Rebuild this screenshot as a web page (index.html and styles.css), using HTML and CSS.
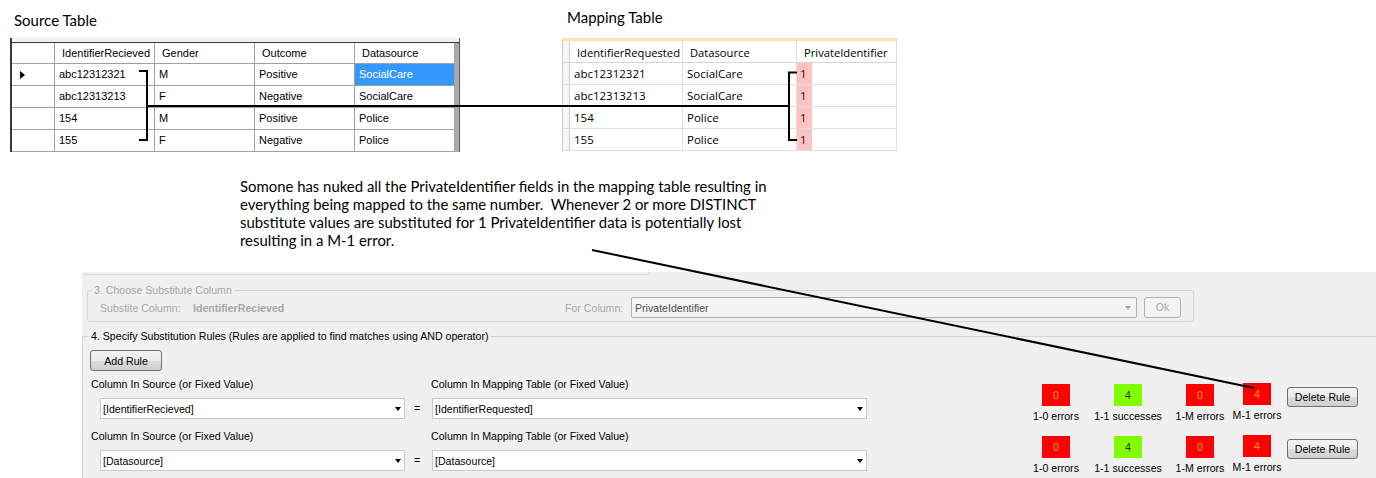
FILE: index.html
```html
<!DOCTYPE html>
<html>
<head>
<meta charset="utf-8">
<link rel="stylesheet" href="styles.css">
</head>
<body>
<div class="top">
  <section class="src">
    <h2 class="title src-title">Source Table</h2>
    <div class="sgrid">
      <div class="sband"></div>
      <div class="srow shead"><div class="rh"></div><div>IdentifierRecieved</div><div>Gender</div><div>Outcome</div><div>Datasource</div></div>
      <div class="srow"><div class="rh"><span class="cur"></span></div><div>abc12312321</div><div>M</div><div>Positive</div><div class="sel">SocialCare</div></div>
      <div class="srow"><div class="rh"></div><div>abc12313213</div><div>F</div><div>Negative</div><div>SocialCare</div></div>
      <div class="srow"><div class="rh"></div><div>154</div><div>M</div><div>Positive</div><div>Police</div></div>
      <div class="srow"><div class="rh"></div><div>155</div><div>F</div><div>Negative</div><div>Police</div></div>
      <div class="srow"><div class="rh"></div><div></div><div></div><div></div><div></div></div>
    </div>
  </section>
  <section class="map">
    <h2 class="title map-title">Mapping Table</h2>
    <div class="mgrid">
      <div class="mband"></div>
      <div class="mrow mhead"><div class="rh"></div><div>IdentifierRequested</div><div>Datasource</div><div>PrivateIdentifier</div></div>
      <div class="mrow"><div class="rh"></div><div>abc12312321</div><div>SocialCare</div><div class="pink">1</div></div>
      <div class="mrow"><div class="rh"></div><div>abc12313213</div><div>SocialCare</div><div class="pink">1</div></div>
      <div class="mrow"><div class="rh"></div><div>154</div><div>Police</div><div class="pink">1</div></div>
      <div class="mrow"><div class="rh"></div><div>155</div><div>Police</div><div class="pink">1</div></div>
    </div>
  </section>
</div>

<p class="note">Somone has nuked all the PrivateIdentifier fields in the mapping table resulting in<br>everything being mapped to the same number.&nbsp; Whenever 2 or more DISTINCT<br>substitute values are substituted for 1 PrivateIdentifier data is potentially lost<br>resulting in a M-1 error.</p>

<div class="panel">
  <div class="prev"></div>
  <fieldset class="gb gb3">
    <legend>3. Choose Substitute Column</legend>
    <div class="gb3-row">
      <span class="lbl-sub">Substite Column:</span>
      <span class="val-sub">IdentifierRecieved</span>
      <span class="lbl-for">For Column:</span>
      <div class="combo dis"><span>PrivateIdentifier</span><span class="arrow"></span></div>
      <button class="btn ok" disabled>Ok</button>
    </div>
  </fieldset>
  <fieldset class="gb gb4">
    <legend>4. Specify Substitution Rules (Rules are applied to find matches using AND operator)</legend>
    <button class="btn add">Add Rule</button>
    <div class="rule">
      <div class="col-src">
        <div class="clabel">Column In Source (or Fixed Value)</div>
        <div class="combo c-src"><span>[IdentifierRecieved]</span><span class="arrow"></span></div>
      </div>
      <div class="eq">=</div>
      <div class="col-map">
        <div class="clabel">Column In Mapping Table (or Fixed Value)</div>
        <div class="combo c-map"><span>[IdentifierRequested]</span><span class="arrow"></span></div>
      </div>
      <div class="stats">
        <div class="stat w72"><div class="box red">0</div><div class="slabel">1-0 errors</div></div>
        <div class="stat w72"><div class="box green">4</div><div class="slabel">1-1 successes</div></div>
        <div class="stat w72"><div class="box red">0</div><div class="slabel">1-M errors</div></div>
        <div class="stat w42 up"><div class="box red">4</div><div class="slabel">M-1 errors</div></div>
      </div>
      <button class="btn del">Delete Rule</button>
    </div>
    <div class="rule">
      <div class="col-src">
        <div class="clabel">Column In Source (or Fixed Value)</div>
        <div class="combo c-src"><span>[Datasource]</span><span class="arrow"></span></div>
      </div>
      <div class="eq">=</div>
      <div class="col-map">
        <div class="clabel">Column In Mapping Table (or Fixed Value)</div>
        <div class="combo c-map"><span>[Datasource]</span><span class="arrow"></span></div>
      </div>
      <div class="stats">
        <div class="stat w72"><div class="box red">0</div><div class="slabel">1-0 errors</div></div>
        <div class="stat w72"><div class="box green">4</div><div class="slabel">1-1 successes</div></div>
        <div class="stat w72"><div class="box red">0</div><div class="slabel">1-M errors</div></div>
        <div class="stat w42 up"><div class="box red">4</div><div class="slabel">M-1 errors</div></div>
      </div>
      <button class="btn del">Delete Rule</button>
    </div>
  </fieldset>
</div>

<svg class="annot" width="1376" height="478" viewBox="0 0 1376 478">
  <g fill="none" stroke="#000" stroke-width="2">
    <path d="M139 71H147V140H139"/>
    <path d="M147 106H789"/>
    <path d="M797 72.5H789V140H797"/>
    <path d="M592 250L1254 388"/>
  </g>
</svg>
</body>
</html>
```

FILE: styles.css
```css
* { box-sizing: border-box; }
html, body { margin: 0; padding: 0; }
body {
  width: 1376px;
  height: 478px;
  overflow: hidden;
  background: #fff;
  position: relative;
  font-family: "Liberation Sans", Arial, sans-serif;
  color: #000;
}

/* ---------- top tables ---------- */
.top { display: flex; height: 152px; overflow: hidden; }
.title {
  margin: 0;
  font-family: Lato, "Open Sans", sans-serif;
  font-weight: normal;
  font-size: 15px;
  line-height: 18px;
  height: 18px;
  white-space: nowrap;
}
.src { width: 450px; margin-left: 10px; flex: none; }
.src-title { margin-top: 11px; margin-bottom: 9px; padding-left: 4px; }
.map { width: 336px; margin-left: 102px; flex: none; }
.map-title { margin-top: 8px; margin-bottom: 12px; padding-left: 5px; }

.sgrid {
  width: 450px;
  height: 114px;
  border-left: 2px solid #3a3a3a;
  border-right: 1px solid #5a5a5a;
  background: #ababab;
  overflow: hidden;
}
.sband { height: 5px; background: #f0f0f0; border-bottom: 1px solid #3a3a3a; }
.srow {
  display: grid;
  grid-template-columns: 43px 100px 100px 100px 100px;
  height: 22px;
  width: 443px;
}
.srow > div {
  background: #fff;
  border-right: 1px solid #a0a0a0;
  border-bottom: 1px solid #a0a0a0;
  font-size: 11px;
  line-height: 21px;
  padding-left: 4px;
  white-space: nowrap;
  overflow: hidden;
}
.srow.shead { height: 21px; }
.srow.shead > div { padding-left: 7px; line-height: 21px; }
.srow > .sel { background: #3399ff; color: #fff; }
.cur {
  display: inline-block;
  width: 0; height: 0;
  border-left: 5px solid #000;
  border-top: 4px solid transparent;
  border-bottom: 4px solid transparent;
  margin-left: 4px;
  vertical-align: -1px;
}

.mgrid { width: 336px; }
.mband { height: 3px; background: #f5e4b4; }
.mrow {
  display: grid;
  grid-template-columns: 8px 113px 114px 100px;
  height: 22px;
}
.mrow > div {
  border-right: 1px solid #e0e0e0;
  border-bottom: 1px solid #e0e0e0;
  font-family: "Open Sans", sans-serif;
  font-size: 11.5px;
  line-height: 21px;
  padding-left: 4px;
  white-space: nowrap;
  overflow: hidden;
}
.mrow.mhead > div { padding-left: 7px; border-bottom-color: #d5d5d5; font-size: 11.2px; line-height: 23px; }
.mrow > div.rh { padding: 0; background: #f6f6f6; border-left: 1px solid #d0d0d0; border-right-color: #d0d0d0; }
.mrow > .pink {
  background: linear-gradient(to right, #ffc2c2 0, #ffc2c2 15px, #fff 15px);
  color: #4a0000;
  padding-left: 3px;
}

/* ---------- note ---------- */
.note {
  margin: 25px 0 0 240px;
  font-family: Lato, "Open Sans", sans-serif;
  font-size: 14.9px;
  line-height: 18px;
  height: 72px;
  white-space: nowrap;
}

/* ---------- panel ---------- */
.panel {
  margin: 23px 0 0 82px;
  height: 206px;
  background: #f0f0f0;
  overflow: hidden;
  font-size: 10.6px;
}
.prev {
  width: 568px;
  height: 3px;
  border-bottom: 1px solid #d6dee6;
  border-right: 1px solid #d6dee6;
  border-bottom-right-radius: 4px;
}
.gb {
  margin: 0;
  padding: 0;
  border: 1px solid #d5d5d5;
  border-radius: 3px;
  min-width: 0;
}
.gb legend {
  padding: 0 2px;
  line-height: 13px;
  font-size: 10.6px;
}
.gb3 { margin: 9px 0 0 5px; width: 1107px; padding-bottom: 3px; }
.gb3 legend { margin-left: 4px; color: #a6a6a6; }
.gb3-row { display: flex; align-items: center; height: 21px; padding-left: 12px; color: #a6a6a6; }
.lbl-sub { width: 93px; flex: none; }
.val-sub { width: 372px; flex: none; font-weight: bold; }
.lbl-for { width: 66px; flex: none; }

.gb4 { margin: 8px 0 0 0; width: 1320px; height: 200px; border-right: none; }
.gb4 legend { margin-left: 6px; }

.btn {
  font-family: "Liberation Sans", Arial, sans-serif;
  font-size: 10.6px;
  color: #000;
  border: 1px solid #707070;
  border-radius: 3px;
  background: linear-gradient(#f2f2f2 0%, #ebebeb 50%, #dddddd 50%, #cfcfcf 100%);
  padding: 0;
  display: flex;
  align-items: center;
  justify-content: center;
  flex: none;
}
.btn.ok {
  width: 37px; height: 21px; margin-left: 7px; margin-top: -1px;
  background: #f4f4f4; border-color: #adb2b5; color: #a6a6a6;
}
.btn.add { width: 72px; height: 21px; margin: 7px 0 0 7px; }
.btn.del { width: 71px; height: 20px; margin: 10px 0 0 9px; }

.combo {
  display: flex;
  align-items: center;
  height: 21px;
  background: #fff;
  border: 1px solid #c9c9c9;
  padding: 0 3px 0 2px;
  font-size: 10.6px;
  flex: none;
  white-space: nowrap;
}
.combo .arrow {
  margin-left: auto;
  width: 0; height: 0;
  border-left: 3.5px solid transparent;
  border-right: 3.5px solid transparent;
  border-top: 4px solid #000;
}
.combo.dis {
  width: 506px;
  background: #f4f4f4;
  border-color: #adb2b5;
  border-radius: 2px;
  color: #505050;
  padding: 0 5px 0 3px;
}
.combo.dis .arrow { border-top-color: #a6a6a6; }

.rule { display: flex; height: 42px; margin-top: 6px; }
.rule + .rule { margin-top: 10px; }
.col-src { width: 314px; margin-left: 8px; flex: none; }
.col-map { width: 437px; flex: none; }
.clabel { line-height: 14px; height: 14px; white-space: nowrap; }
.c-src { width: 305px; margin: 7px 0 0 9px; }
.c-map { width: 435px; margin: 7px 0 0 1px; }
.eq { width: 26px; flex: none; padding-left: 9px; align-self: flex-end; line-height: 21px; height: 21px; }

.stats { display: flex; margin-left: 152px; flex: none; align-items: flex-start; }
.stat { display: flex; flex-direction: column; align-items: center; flex: none; }
.w72 { width: 72px; }
.w42 { width: 42px; }
.stat.up { margin-top: -1px; }
.box {
  flex: none;
  width: 28px; height: 22px;
  margin-top: 7px;
  display: flex; align-items: center; justify-content: center;
  font-size: 10.6px;
}
.red { background: #ff0000; color: #ffa800; }
.green { background: #80ff00; color: #2a2a2a; }
.slabel { flex: none; margin-top: 4px; line-height: 13px; white-space: nowrap; }

/* ---------- annotation overlay ---------- */
.annot { position: absolute; left: 0; top: 0; pointer-events: none; }
```
